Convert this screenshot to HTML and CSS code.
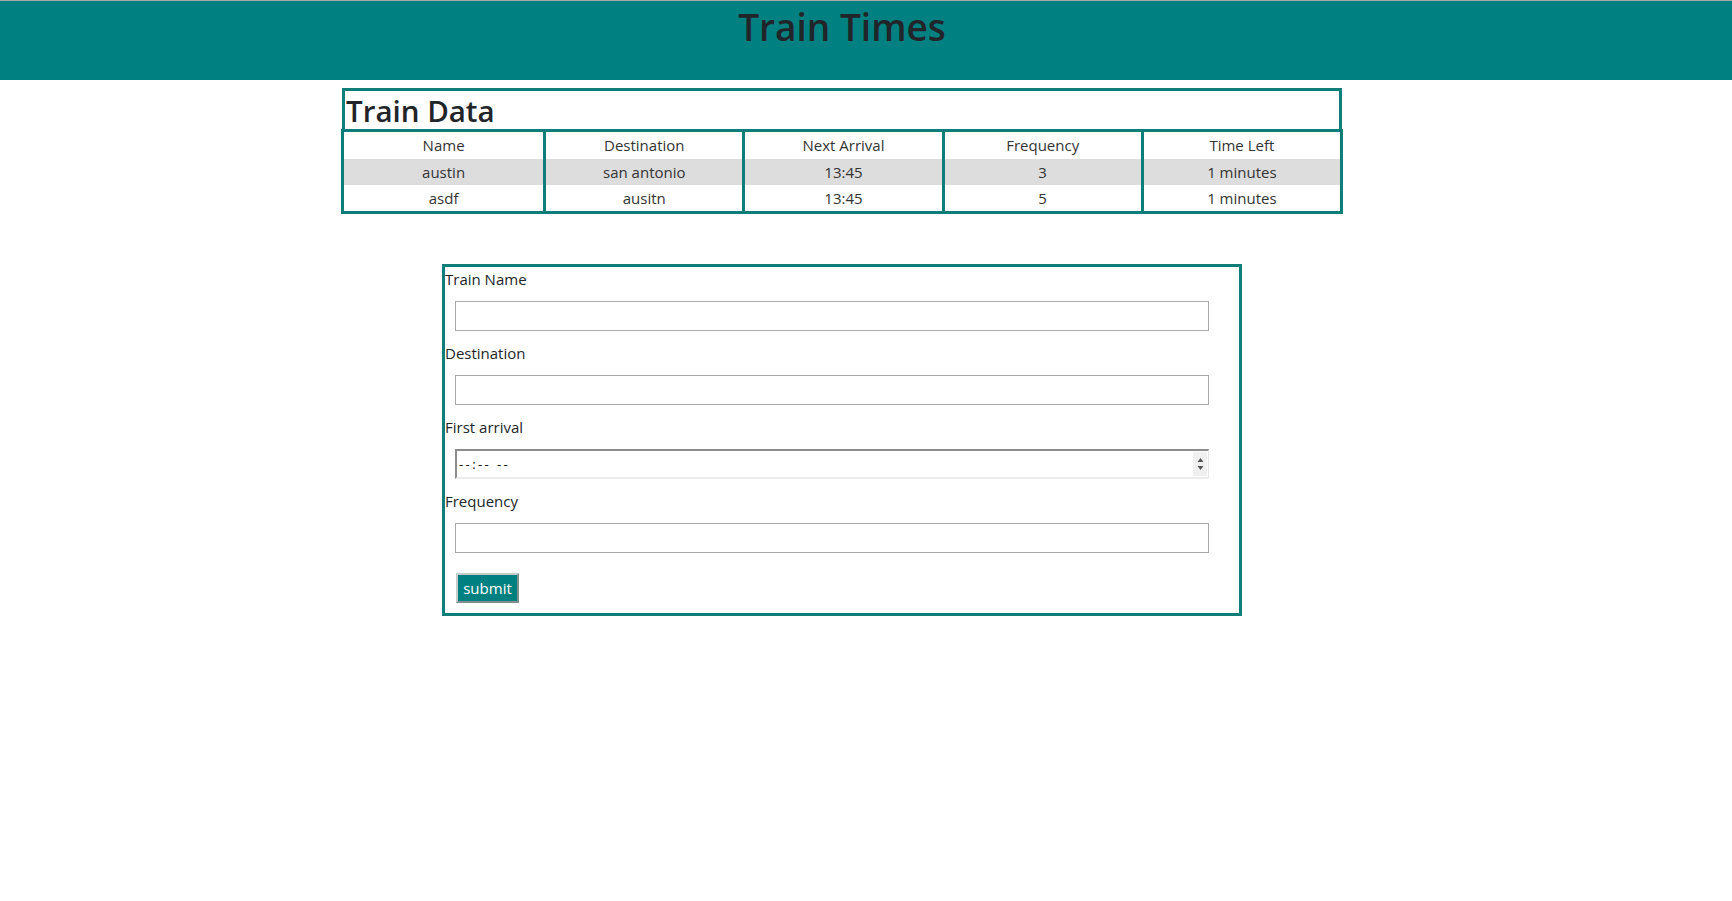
FILE: index.html
```html
<!DOCTYPE html>
<html lang="en">
<head>
<meta charset="utf-8">
<title>Train Times</title>
<link rel="stylesheet" href="styles.css">
</head>
<body>
<header class="site-header">
  <div class="page">
    <h1 class="site-title">Train Times</h1>
  </div>
</header>
<main class="page">
  <section class="data-panel">
    <h2 class="data-title">Train Data</h2>
    <table class="train-table">
      <thead>
        <tr><th>Name</th><th>Destination</th><th>Next Arrival</th><th>Frequency</th><th>Time Left</th></tr>
      </thead>
      <tbody>
        <tr class="odd"><td>austin</td><td>san antonio</td><td>13:45</td><td>3</td><td>1 minutes</td></tr>
        <tr><td>asdf</td><td>ausitn</td><td>13:45</td><td>5</td><td>1 minutes</td></tr>
      </tbody>
    </table>
  </section>

  <form class="train-form">
    <div class="field">
      <label class="field-label" for="name">Train Name</label>
      <input class="field-input" id="name" type="text">
    </div>
    <div class="field">
      <label class="field-label" for="dest">Destination</label>
      <input class="field-input" id="dest" type="text">
    </div>
    <div class="field">
      <label class="field-label">First arrival</label>
      <div class="time-input">
        <span class="time-text">--:-- --</span>
        <span class="spin">
          <svg width="9" height="20" viewBox="0 0 9 20"><path d="M4.5 4 L7.5 8 L1.5 8 Z" fill="#555"/><path d="M1.5 12 L7.5 12 L4.5 16 Z" fill="#555"/></svg>
        </span>
      </div>
    </div>
    <div class="field">
      <label class="field-label" for="freq">Frequency</label>
      <input class="field-input" id="freq" type="text">
    </div>
    <button class="submit-btn" type="button">submit</button>
  </form>
</main>
</body>
</html>
```

FILE: styles.css
```css
html, body {
  margin: 0;
  padding: 0;
  background: #ffffff;
}

body {
  font-family: "Open Sans", "Noto Sans", sans-serif;
  font-size: 15px;
  color: #212529;
}

.page {
  width: 1684px;
}

.site-header {
  background: #008080;
  border-top: 1px solid #a9a9a9;
  height: 79px;
  box-sizing: content-box;
}

.site-title {
  margin: 0;
  padding-top: 2px;
  font-size: 37px;
  font-weight: 600;
  line-height: 48px;
  text-align: center;
  color: #212529;
}

.data-panel {
  margin-top: 8px;
}

.data-title {
  width: 1000px;
  box-sizing: border-box;
  margin: 0 0 0 342px;
  height: 41px;
  padding-left: 1px;
  border: 3px solid #0f7d7a;
  border-bottom: none;
  font-size: 29.5px;
  font-weight: 600;
  line-height: 39px;
  color: #212529;
}

.train-table {
  width: 1002px;
  margin-left: 341px;
  table-layout: fixed;
  border-collapse: separate;
  border-spacing: 0;
  border: 3px solid #0f7d7a;
  color: #333;
}

.train-table th,
.train-table td {
  text-align: center;
  font-weight: normal;
  line-height: 24px;
  padding: 1px 0;
  border-left: 3px solid #0f7d7a;
}

.train-table th {
  padding: 1px 0 2px;
}

.train-table th:first-child,
.train-table td:first-child {
  border-left: none;
}

.train-table tr.odd td {
  background: #dddddd;
}

.train-form {
  width: 800px;
  box-sizing: border-box;
  margin: 50px 0 0 442px;
  border: 3px solid #0f7d7a;
  padding: 0 0 10px 0;
}

.field-label {
  display: block;
  line-height: 24px;
  height: 24px;
}

.field-input,
.time-input {
  display: block;
  box-sizing: border-box;
  width: 754px;
  height: 30px;
  margin: 10px 0 10px 10px;
}

.field-input {
  border: 1px solid #a9a9a9;
  padding: 0 4px;
  font-family: inherit;
  font-size: 14px;
}

.time-input {
  display: flex;
  align-items: center;
  justify-content: space-between;
  border-style: solid;
  border-width: 2px 1px 2px 2px;
  border-color: #8c8c8c #e6e6e6 #ececec #8c8c8c;
  padding: 0 1px 0 2px;
  font-family: "Open Sans", sans-serif;
  font-size: 13px;
  color: #111;
}

.time-text {
  letter-spacing: 2.4px;
}

.spin {
  display: flex;
  align-items: center;
  justify-content: center;
  width: 14px;
  height: 24px;
  background: #f0f0f0;
}

.submit-btn {
  display: block;
  margin: 20px 0 0 11px;
  width: 63px;
  height: 30px;
  box-sizing: border-box;
  padding: 0;
  background: #008080;
  color: #ffffff;
  border: 2px solid;
  border-color: #c4cccc #7d8f8f #7d8f8f #c4cccc;
  font-family: "Open Sans", sans-serif;
  font-size: 15px;
  line-height: 24px;
}
```
